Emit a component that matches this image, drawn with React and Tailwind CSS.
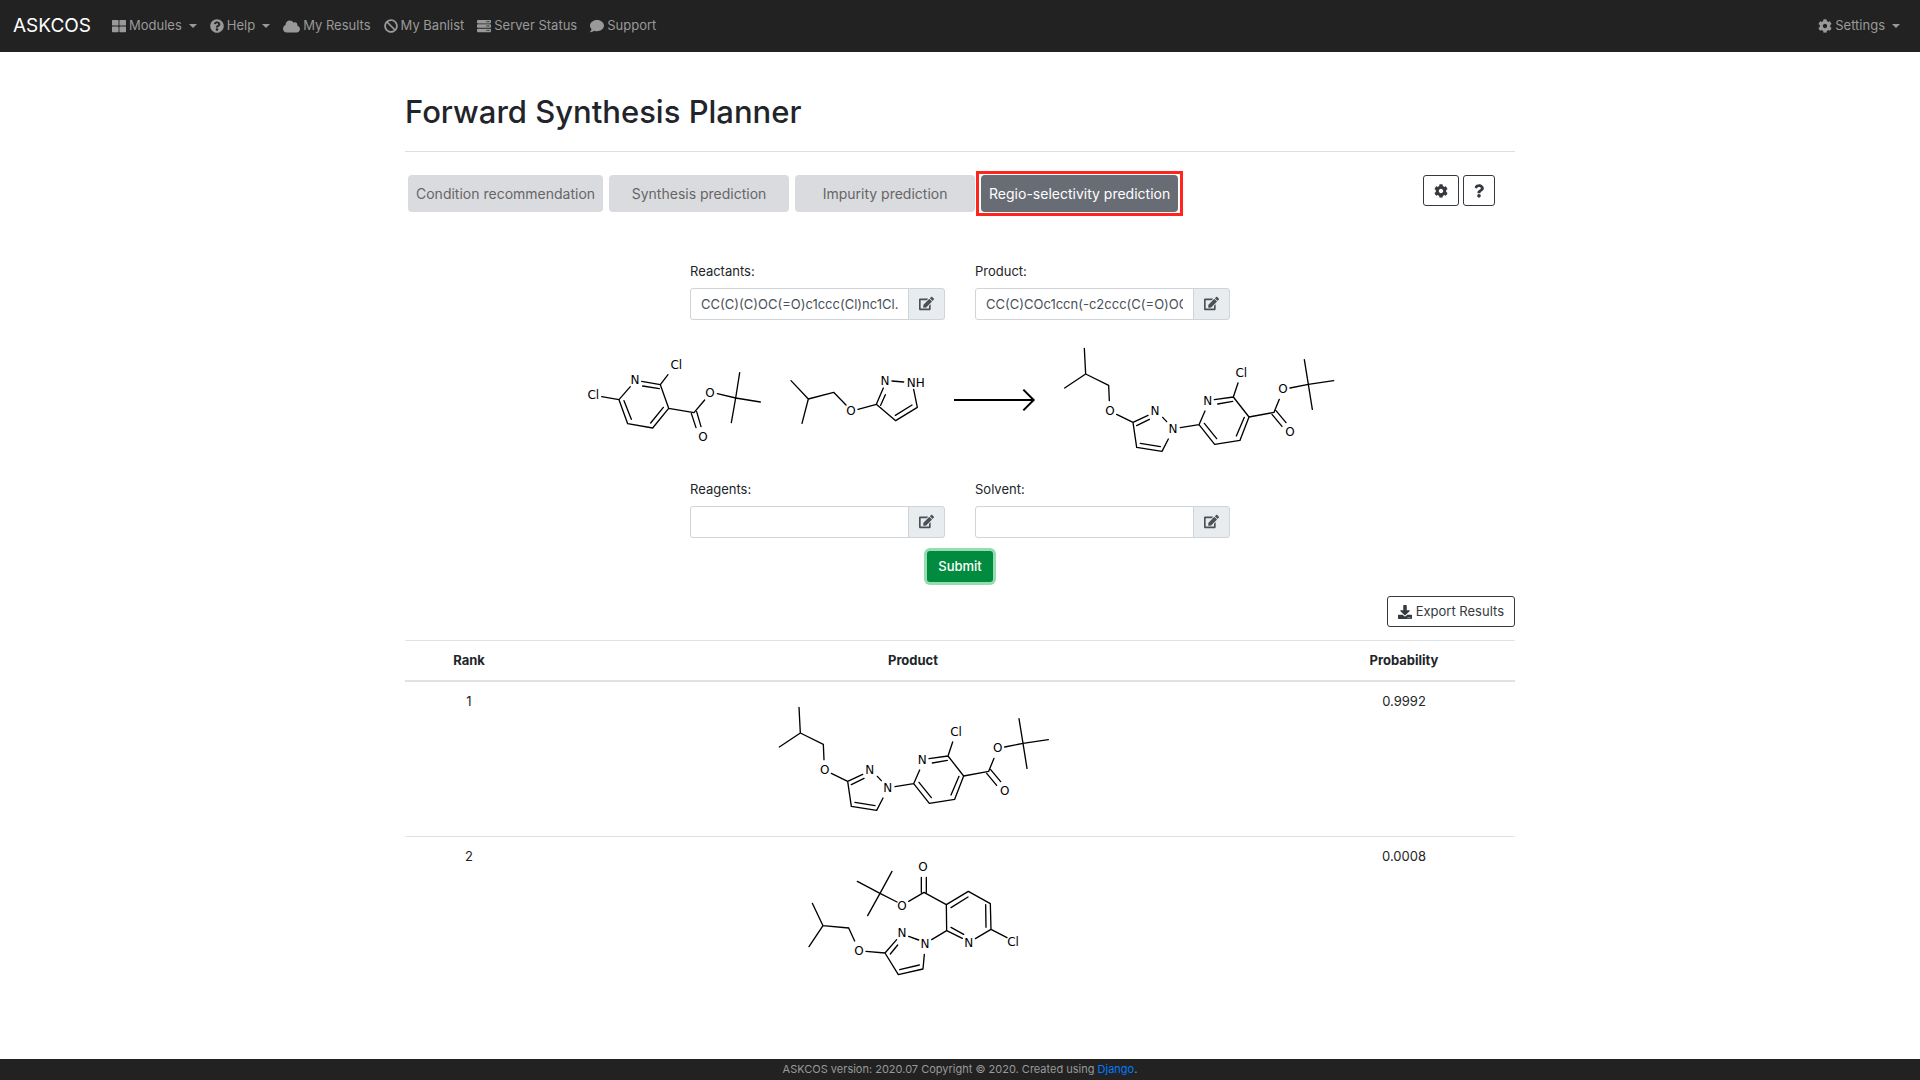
import React from "react";
import {
  FaThLarge,
  FaQuestionCircle,
  FaCloud,
  FaBan,
  FaServer,
  FaComment,
  FaCog,
  FaQuestion,
  FaEdit,
  FaDownload,
} from "react-icons/fa";

/* Skeletal formulas: bond path plus atom labels, three drawing units per pixel. */
function Molecule({ label, box, className, bonds, atoms }) {
  return (
    <svg viewBox={box} className={className} role="img" aria-label={label}>
      <path d={bonds} fill="none" stroke="#000" strokeWidth="4" strokeLinecap="round" />
      {atoms.map(([text, x, y]) => (
        <text
          key={`${x}-${y}`}
          x={x}
          y={y + 13}
          textAnchor="middle"
          fontSize="36"
          fontFamily="DejaVu Sans, sans-serif"
        >
          {text}
        </text>
      ))}
    </svg>
  );
}

const PYRIDINE = {
  label: "tert-butyl 2,6-dichloronicotinate",
  bonds:
    "M95 200L147 209M147 209L181 170M147 209L173 281M162 212L184 268M173 281L248 294M248 294L296 235M242 279L280 232M296 235L271 164M271 164L215 154M268 176L218 168M271 164L294 134M296 235L372 248M372 248L404 210M364 250L378 293M380 245L393 290M442 191L497 204M497 204L509 128M497 204L571 216M497 204L484 278",
  atoms: [["Cl", 70, 194], ["N", 195, 149], ["Cl", 319, 104], ["O", 420, 187], ["O", 399, 320]],
};

const PYRAZOLE = {
  label: "3-isobutoxy-1H-pyrazole",
  bonds:
    "M663 152L715 207M715 207L696 280M715 207L791 187M791 187L828 225M864 238L919 223M919 223L940 174M932 226L946 194M966 153L1001 156M1031 178L1042 232M1042 232L977 272M1026 225L976 256M977 272L919 223",
  atoms: [["O", 843, 241], ["N", 945, 152], ["NH", 1037, 158]],
};

const MAJOR = {
  label: "Major regioisomer",
  bonds:
    "M433 55L437 132M374 174L437 132M437 132L506 166M506 166L508 212M530 253L579 277M579 277L624 256M590 287L628 268M668 262L680 275M685 327L666 364M666 364L590 352M661 350L601 340M590 352L579 277M721 293L777 284M777 284L824 343M793 280L830 326M824 343L900 331M900 331L927 261M889 318L913 262M927 261L880 201M880 201L823 209M878 214L833 222M777 284L795 243M880 201L894 159M927 261L1002 247M1002 247L1018 208M996 253L1026 289M1008 242L1038 278M1050 174L1105 163M1105 163L1093 89M1105 163L1181 152M1105 163L1117 238",
  atoms: [
    ["O", 510, 241],
    ["N", 645, 241],
    ["N", 699, 296],
    ["N", 803, 211],
    ["Cl", 904, 127],
    ["O", 1029, 176],
    ["O", 1050, 305],
  ],
};

const MINOR = {
  label: "Minor regioisomer",
  bonds:
    "M157 190L189 257M189 257L147 320M189 257L266 264M266 264L284 303M318 334L375 339M375 339L410 299M391 342L413 315M446 289L476 300M493 343L489 387M489 387L415 404M478 375L419 389M415 404L375 339M515 299L560 272M560 272L559 194M560 272L607 295M573 262L611 283M646 296L693 268M693 268L741 293M693 268L691 191M678 262L677 194M691 191L625 154M625 154L559 194M624 171L573 203M559 194L492 157M484 157L484 112M499 157L499 112M492 157L446 184M411 186L360 160M360 160L396 94M360 160L292 124M360 160L323 227",
  atoms: [
    ["O", 297, 332],
    ["N", 426, 279],
    ["N", 495, 312],
    ["N", 626, 308],
    ["Cl", 759, 306],
    ["O", 489, 80],
    ["O", 426, 197],
  ],
};

function Caret() {
  return <span className="ml-[7px] border-x-4 border-t-4 border-x-transparent border-t-current" />;
}

function NavItem({ icon: Icon, iconClass = "size-[14px]", children, menu }) {
  const inner = (
    <>
      <Icon className={iconClass} />
      <span className="ml-[3px]">{children}</span>
      {menu && <Caret />}
    </>
  );
  return menu ? (
    <button type="button" aria-haspopup="menu" className="flex items-center whitespace-nowrap">
      {inner}
    </button>
  ) : (
    <a href="#" className="flex items-center whitespace-nowrap">
      {inner}
    </a>
  );
}

function Tab({ children, active }) {
  return (
    <button
      type="button"
      role="tab"
      aria-selected={!!active}
      className={
        active
          ? "h-[37px] min-w-[180px] rounded bg-[#686c75] px-2 text-white"
          : "h-[37px] min-w-[180px] rounded bg-[#dadbdf] px-2 text-[#666]"
      }
    >
      {children}
    </button>
  );
}

function Field({ id, label, value = "" }) {
  return (
    <div>
      <label htmlFor={id} className="mb-[7px] block leading-5">
        {label}
      </label>
      <div className="flex h-8">
        <input
          id={id}
          type="text"
          defaultValue={value}
          className="w-0 min-w-0 flex-1 rounded-l-[3px] border border-[#ced4da] bg-white px-[10px] pt-[2px] text-[#495057] outline-none"
        />
        <button
          type="button"
          aria-label={`Draw ${label}`}
          className="-ml-px flex w-[37px] items-center justify-center rounded-r-[3px] border border-[#ced4da] bg-[#e9ecef] pb-[2px] text-[#495057]"
        >
          <FaEdit className="size-[15px]" />
        </button>
      </div>
    </div>
  );
}

const outlineButton =
  "flex h-[31px] items-center justify-center rounded-[3px] border border-[#343a40] bg-white px-[10px] text-[#343a40]";

export default function App() {
  return (
    <div className="flex min-h-screen flex-col bg-white font-['Inter',sans-serif] text-[13px] text-[#212529]">
      <nav className="flex h-[52px] shrink-0 items-center bg-[#222] pr-5 pl-[13px] text-[#999]">
        <a href="#" className="mr-[21px] text-[19px] text-white">
          ASKCOS
        </a>
        <div className="flex gap-[13px]">
          <NavItem icon={FaThLarge} menu>Modules</NavItem>
          <NavItem icon={FaQuestionCircle} menu>Help</NavItem>
          <NavItem icon={FaCloud} iconClass="size-[17px]">My Results</NavItem>
          <NavItem icon={FaBan}>My Banlist</NavItem>
          <NavItem icon={FaServer}>Server Status</NavItem>
          <NavItem icon={FaComment}>Support</NavItem>
        </div>
        <div className="ml-auto">
          <NavItem icon={FaCog} menu>Settings</NavItem>
        </div>
      </nav>

      <main className="mx-auto w-full max-w-[1110px] flex-1 pt-10">
        <h1 className="text-[31px] leading-10 font-medium">Forward Synthesis Planner</h1>
        <hr className="mt-[19px] border-[#dfdfdf]" />

        <div className="mt-[23px] flex items-start justify-between pr-5 pl-[3px]">
          <div role="tablist" className="flex gap-[6px] text-[14px]">
            <Tab>Condition recommendation</Tab>
            <Tab>Synthesis prediction</Tab>
            <Tab>Impurity prediction</Tab>
            <div role="presentation" className="-mx-[5px] -my-1 border-3 border-[#ff241c] px-[2px] py-px">
              <Tab active>Regio-selectivity prediction</Tab>
            </div>
          </div>
          <div className="flex gap-1">
            <button type="button" aria-label="Settings" className={outlineButton}>
              <FaCog className="size-[14px]" />
            </button>
            <button type="button" aria-label="Help" className={outlineButton}>
              <FaQuestion className="h-[14px] w-[10px]" />
            </button>
          </div>
        </div>

        <form onSubmit={(e) => e.preventDefault()}>
          <div className="mx-auto mt-[49px] grid w-[540px] grid-cols-2 gap-x-[30px]">
            <Field id="reactants" label="Reactants:" value="CC(C)(C)OC(=O)c1ccc(Cl)nc1Cl.CC(C)COc1cc[nH]n1" />
            <Field id="product" label="Product:" value="CC(C)COc1ccn(-c2ccc(C(=O)OC(C)(C)C)c(Cl)n2)n1" />
          </div>

          <div className="mt-[10px] flex justify-center">
            <Molecule {...PYRIDINE} box="0 0 615 420" className="h-[140px] w-[205px]" />
            <Molecule {...PYRAZOLE} box="615 0 495 420" className="h-[140px] w-[165px]" />
            <svg viewBox="0 0 330 420" className="h-[140px] w-[110px]" aria-hidden="true">
              <path d="M42 210H281M250 179L281 210L250 241" fill="none" stroke="#000" strokeWidth="6" />
            </svg>
            <Molecule {...MAJOR} box="330 0 900 420" className="h-[140px] w-[300px]" />
          </div>

          <div className="mx-auto mt-[9px] grid w-[540px] grid-cols-2 gap-x-[30px]">
            <Field id="reagents" label="Reagents:" />
            <Field id="solvent" label="Solvent:" />
          </div>

          <div className="mt-[13px] flex justify-center">
            <button
              type="submit"
              className="h-[31px] w-[66px] rounded-[3px] bg-[#008b3e] font-medium text-white ring-3 ring-[#97dbb0]"
            >
              Submit
            </button>
          </div>
        </form>

        <div className="mt-[14px] flex justify-end">
          <button type="button" className={outlineButton}>
            <FaDownload className="mr-1 size-[14px]" />
            Export Results
          </button>
        </div>

        <table className="mt-[13px] w-full table-fixed border-collapse text-center">
          <colgroup>
            <col className="w-[128px]" />
            <col />
            <col className="w-[222px]" />
          </colgroup>
          <thead>
            <tr className="h-10 border-t border-b-2 border-[#dee2e6]">
              <th className="font-bold">Rank</th>
              <th className="font-bold">Product</th>
              <th className="font-bold">Probability</th>
            </tr>
          </thead>
          <tbody>
            <tr className="border-b border-[#dee2e6] align-top">
              <td className="pt-[9px] leading-5">1</td>
              <td className="pt-2 pb-[6px]">
                <Molecule {...MAJOR} box="325 3 900 420" className="mx-auto h-[140px] w-[300px]" />
              </td>
              <td className="pt-[9px] leading-5">0.9992</td>
            </tr>
            <tr className="align-top">
              <td className="pt-[9px] leading-5">2</td>
              <td className="pt-2 pb-[6px]">
                <Molecule {...MINOR} box="9 15 900 420" className="mx-auto h-[140px] w-[300px]" />
              </td>
              <td className="pt-[9px] leading-5">0.0008</td>
            </tr>
          </tbody>
        </table>
      </main>

      <footer className="flex h-[21px] shrink-0 items-center justify-center bg-[#222] text-[11px] text-[#999]">
        <p>
          ASKCOS version: 2020.07 Copyright © 2020. Created using{" "}
          <a href="#" className="text-[#007bff]">Django</a>.
        </p>
      </footer>
    </div>
  );
}
